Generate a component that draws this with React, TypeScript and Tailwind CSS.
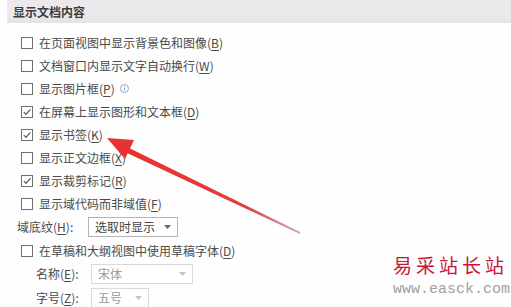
import React from "react";

type RowProps = {
  label: string;
  hotkey: string;
  checked?: boolean;
  info?: boolean;
};

const fontStack = { fontFamily: '"Noto Sans CJK SC", "Noto Sans", sans-serif' };

const Label: React.FC<{ label: string; hotkey: string }> = ({ label, hotkey }) => (
  <span>
    {label}(<span className="underline underline-offset-2">{hotkey}</span>)
  </span>
);

const CheckRow: React.FC<RowProps> = ({ label, hotkey, checked, info }) => {
  return (
    <div className="flex h-[23px] items-center pl-[21px]">
      <div className="flex h-[12px] w-[12px] items-center justify-center border border-[#6f6f6f] bg-white">
        {checked && (
          <svg width="10" height="10" viewBox="0 0 10 10">
            <path d="M1.8 5.2 L4 7.4 L8.4 2.4" fill="none" stroke="#555" strokeWidth="1.2" />
          </svg>
        )}
      </div>
      <div className="ml-[6px] flex items-center text-[12px] text-[#4a4a4a]">
        <Label label={label} hotkey={hotkey} />
        {info && (
          <svg className="ml-[5px]" width="9" height="9" viewBox="0 0 9 9">
            <circle cx="4.5" cy="4.5" r="4" fill="none" stroke="#7d9cc0" strokeWidth="0.9" />
            <circle cx="4.5" cy="2.6" r="0.6" fill="#7d9cc0" />
            <path d="M4.5 3.9 V6.8" stroke="#7d9cc0" strokeWidth="0.9" />
          </svg>
        )}
      </div>
    </div>
  );
};

type SelectProps = {
  value: string;
  width: string;
  disabled?: boolean;
};

const FakeSelect: React.FC<SelectProps> = ({ value, width, disabled }) => (
  <div
    className={`flex h-[20px] items-center justify-between border bg-white pl-[6px] pr-[6px] text-[12px] ${width} ${
      disabled ? "border-[#dadada] text-[#9a9a9a]" : "border-[#b3b3b3] text-[#444]"
    }`}
  >
    <span>{value}</span>
    <svg width="7" height="4" viewBox="0 0 7 4">
      <path d="M0 0 H7 L3.5 4 Z" fill={disabled ? "#c4c4c4" : "#666"} />
    </svg>
  </div>
);

const App: React.FC = () => {
  const rows: RowProps[] = [
    { label: "在页面视图中显示背景色和图像", hotkey: "B" },
    { label: "文档窗口内显示文字自动换行", hotkey: "W" },
    { label: "显示图片框", hotkey: "P", info: true },
    { label: "在屏幕上显示图形和文本框", hotkey: "D", checked: true },
    { label: "显示书签", hotkey: "K", checked: true },
    { label: "显示正文边框", hotkey: "X" },
    { label: "显示裁剪标记", hotkey: "R", checked: true },
    { label: "显示域代码而非域值", hotkey: "F" },
  ];

  return (
    <div className="relative h-[307px] w-[511px] overflow-hidden bg-[#fefefe]" style={fontStack}>
      {/* section header */}
      <div className="ml-[7px] flex h-[23px] items-center bg-gradient-to-b from-[#ece9ed] from-60% to-[#e3e3e3] pl-[6px] text-[12px] font-semibold text-[#3c3c3c]">
        显示文档内容
      </div>

      <div className="mt-[8px] flex flex-col">
        {rows.map((r) => (
          <CheckRow key={r.label} {...r} />
        ))}

        <div className="flex h-[24px] items-center pl-[17px] text-[12px] text-[#4a4a4a]">
          <div className="w-[71px]">
            <Label label="域底纹" hotkey="H" />:
          </div>
          <FakeSelect value="选取时显示" width="w-[90px]" />
        </div>

        <CheckRow label="在草稿和大纲视图中使用草稿字体" hotkey="D" />

        <div className="flex h-[24px] items-center pl-[36px] text-[12px] text-[#4a4a4a]">
          <div className="w-[55px]">
            <Label label="名称" hotkey="E" />:
          </div>
          <FakeSelect value="宋体" width="w-[102px]" disabled />
        </div>

        <div className="flex h-[24px] items-center pl-[36px] text-[12px] text-[#4a4a4a]">
          <div className="w-[55px]">
            <Label label="字号" hotkey="Z" />:
          </div>
          <FakeSelect value="五号" width="w-[58px]" disabled />
        </div>
      </div>

      {/* red annotation arrow */}
      <svg className="pointer-events-none absolute left-0 top-0" width="511" height="307" viewBox="0 0 511 307">
        <defs>
          <linearGradient id="shaft" x1="125" y1="149" x2="300" y2="233" gradientUnits="userSpaceOnUse">
            <stop offset="0" stopColor="#e8302f" />
            <stop offset="0.7" stopColor="#e0403f" />
            <stop offset="1" stopColor="#b07080" stopOpacity="0.6" />
          </linearGradient>
        </defs>
        <polygon points="123,145 127,153 300,234 300,232" fill="url(#shaft)" />
        <polygon points="107,138 134,140 125,159" fill="#e83232" />
      </svg>

      {/* watermark */}
      <div className="pointer-events-none absolute left-[393px] top-[253px] flex flex-col whitespace-nowrap">
        <span className="text-[19px] leading-[24px] tracking-[4px] text-[#c8143a]">易采站长站</span>
        <span
          className="mt-[7px] text-[15px] leading-[12px] text-[#a0a0a0]"
          style={{ fontFamily: '"Liberation Mono", monospace' }}
        >
          www.easck.com
        </span>
      </div>
    </div>
  );
};

export default App;
